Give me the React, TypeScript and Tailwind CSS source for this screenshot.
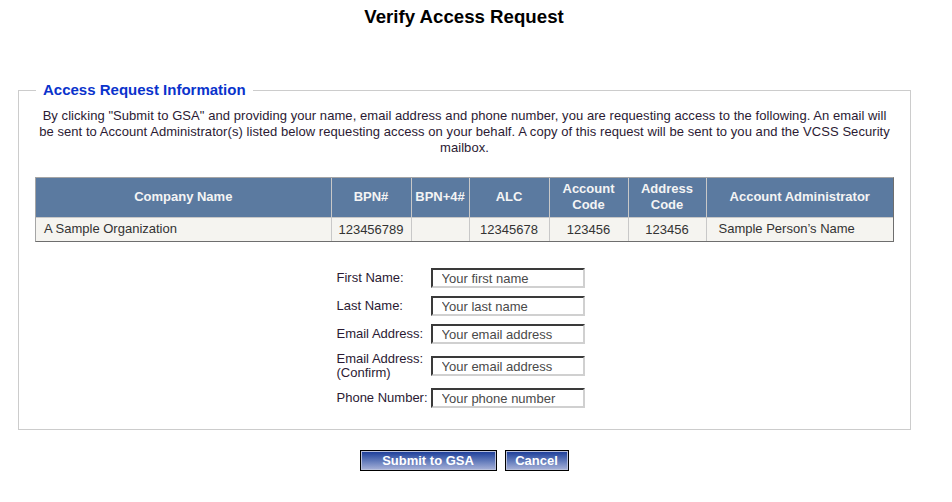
import React, { JSX } from 'react';

interface FormRow {
    id: string;
    label: string[];
    placeholder: string;
}

const columns: { title: string[]; width: string }[] = [
    { title: ['Company Name'], width: 'w-[295px]' },
    { title: ['BPN#'], width: 'w-[80px]' },
    { title: ['BPN+4#'], width: 'w-[58px]' },
    { title: ['ALC'], width: 'w-[80px]' },
    { title: ['Account', 'Code'], width: 'w-[79px]' },
    { title: ['Address', 'Code'], width: 'w-[78px]' },
    { title: ['Account Administrator'], width: 'w-[187px]' },
];

const formRows: FormRow[] = [
    { id: 'firstName', label: ['First Name:'], placeholder: 'Your first name' },
    { id: 'lastName', label: ['Last Name:'], placeholder: 'Your last name' },
    { id: 'email', label: ['Email Address:'], placeholder: 'Your email address' },
    { id: 'emailConfirm', label: ['Email Address:', '(Confirm)'], placeholder: 'Your email address' },
    { id: 'phone', label: ['Phone Number:'], placeholder: 'Your phone number' },
];

function AccessTable(): JSX.Element {
    return (
        <div className="mt-[21px] border-t border-l border-t-[#a5a5a5] border-l-[#a5a5a5] border-r border-b border-r-[#6e6e6e] border-b-[#6e6e6e]">
            <table className="w-full table-fixed border-collapse text-[13px]">
                <colgroup>
                    {columns.map((col, i) => (
                        <col key={i} className={col.width} />
                    ))}
                </colgroup>
                <thead>
                    <tr className="bg-[#5b7aa0]">
                        {columns.map((col, i) => (
                            <th
                                key={i}
                                className={`h-[39px] border-b border-[#c8c8c8] text-center font-bold leading-[16px] text-[#f4f4f4] ${i < columns.length - 1 ? 'border-r' : ''}`}
                            >
                                {col.title.map((t) => (
                                    <div key={t}>{t}</div>
                                ))}
                            </th>
                        ))}
                    </tr>
                </thead>
                <tbody>
                    <tr className="bg-[#f5f4f0] text-[#333]">
                        <td className="h-[24px] border-r border-[#c8c8c8] pl-[8px] pb-[2px] text-left">A Sample Organization</td>
                        <td className="border-r border-[#c8c8c8] text-center">123456789</td>
                        <td className="border-r border-[#c8c8c8] text-center"></td>
                        <td className="border-r border-[#c8c8c8] text-center">12345678</td>
                        <td className="border-r border-[#c8c8c8] text-center">123456</td>
                        <td className="border-r border-[#c8c8c8] text-center">123456</td>
                        <td className="pl-[12px] pb-[2px] text-left">Sample Person&rsquo;s Name</td>
                    </tr>
                </tbody>
            </table>
        </div>
    );
}

function RequestForm(): JSX.Element {
    return (
        <div className="mt-[22px] flex justify-center pr-[8px]">
            <div className="flex flex-col">
                {formRows.map((row) => (
                    <div key={row.id} className="flex items-center py-[4px]">
                        <label htmlFor={row.id} className="w-[94px] text-[13px] leading-[14px] text-[#2b1a33]">
                            {row.label.map((l) => (
                                <div key={l}>{l}</div>
                            ))}
                        </label>
                        <input
                            id={row.id}
                            type="text"
                            placeholder={row.placeholder}
                            className="h-[20px] w-[154px] border-2 border-t-[#3a3a3a] border-l-[#3a3a3a] border-r-[#d0d0d0] border-b-[#d0d0d0] bg-white pl-[9px] text-[13px] text-[#333] outline-none placeholder:text-[#4a4a4a]"
                        />
                    </div>
                ))}
            </div>
        </div>
    );
}

function GradientButton({ label, width }: { label: string; width: string }): JSX.Element {
    return (
        <button
            type="button"
            className={`${width} h-[21px] border border-black bg-gradient-to-b from-[#183896] to-[#aab3d8] text-[13px] font-bold leading-[17px] text-white shadow-[inset_0_0_0_1px_#b8c0dc]`}
        >
            {label}
        </button>
    );
}

export default function App(): JSX.Element {
    return (
        <div className="w-[928px] bg-white font-['Liberation_Sans',Arial,sans-serif]">
            <h1 className="pt-[6px] text-center text-[18.67px] font-bold leading-[22px] text-black">
                Verify Access Request
            </h1>

            <fieldset className="ml-[18px] mr-[19px] mt-[53px] border border-[#cccccc] px-[16px] pt-[9px] pb-[17px]">
                <legend className="ml-[1px] px-[7px] text-[15px] font-bold leading-[18px] text-[#0a33cc]">
                    Access Request Information
                </legend>
                <p className="text-center text-[13px] leading-[16px] tracking-[0.06px] text-[#2b1a33]">
                    By clicking "Submit to GSA" and providing your name, email address and phone number, you are requesting access to the following. An email will be sent to Account Administrator(s) listed below requesting access on your behalf. A copy of this request will be sent to you and the VCSS Security mailbox.
                </p>

                <AccessTable />
                <RequestForm />
            </fieldset>

            <div className="mt-[20px] flex justify-center gap-[8px]">
                <GradientButton label="Submit to GSA" width="w-[137px]" />
                <GradientButton label="Cancel" width="w-[64px]" />
            </div>
        </div>
    );
}
